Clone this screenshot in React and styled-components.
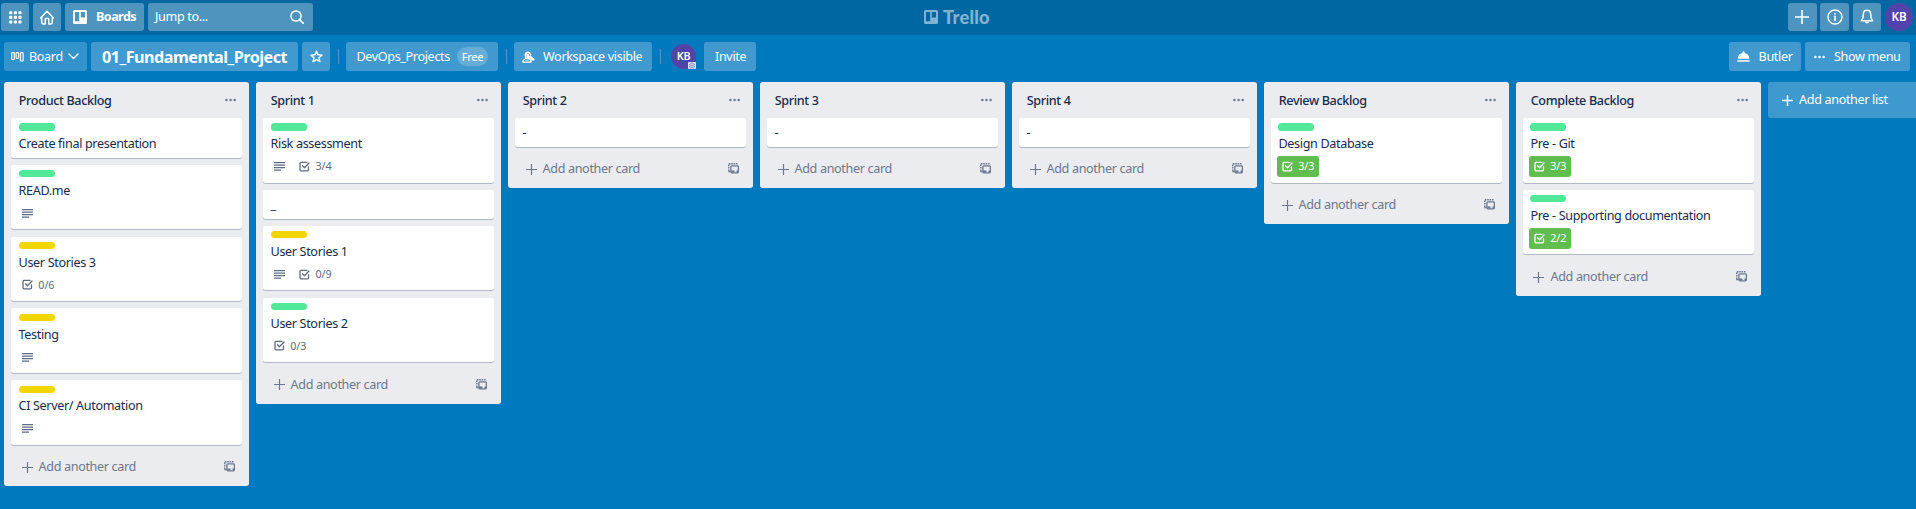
import React from "react";
import styled, { createGlobalStyle } from "styled-components";

const Global = createGlobalStyle`
  * { box-sizing: border-box; }
  html, body { margin: 0; padding: 0; height: 100%; overflow: hidden; }
  body {
    background: #0079bf;
    color: #172b4d;
    font: 400 12.6px/18px "Noto Sans", "Open Sans", sans-serif;
    letter-spacing: -0.35px;
  }
  svg { display: block; flex: none; }
`;

const Page = styled.div`
  width: 100vw;
  height: 100vh;
  overflow: hidden;
  display: flex;
  flex-direction: column;
`;

const Header = styled.header`
  height: 35px;
  flex: none;
  display: grid;
  grid-template-columns: 1fr auto 1fr;
  align-items: center;
  padding: 0 3px 1px 1px;
  background: #0067a3;
  color: #fff;
`;

const HeaderGroup = styled.div`
  display: flex;
  align-items: center;
  gap: 3.6px;
  justify-content: ${(p) => (p.$end ? "flex-end" : "flex-start")};
`;

const HeaderButton = styled.button`
  height: 28px;
  width: ${(p) => p.$w || "28.8px"};
  display: flex;
  align-items: center;
  justify-content: ${(p) => (p.$left ? "flex-start" : "center")};
  gap: 9px;
  padding: ${(p) => (p.$left ? "0 0 0 8px" : "0")};
  border: 0;
  border-radius: 2.7px;
  background: rgba(255, 255, 255, 0.3);
  color: #fff;
  font: inherit;
  font-weight: ${(p) => (p.$bold ? 700 : 400)};
  letter-spacing: ${(p) => (p.$bold ? "-0.55px" : "inherit")};
`;

const Search = styled(HeaderButton).attrs({ as: "div" })`
  width: 165px;
  justify-content: space-between;
  padding: 0 9px 0 7px;
`;

const Logo = styled.div`
  display: flex;
  align-items: center;
  gap: 5px;
  color: #80b3d1;
  font: 900 18.3px/24px Lato, "Noto Sans", sans-serif;
  letter-spacing: 0.2px;
`;

const Avatar = styled.div`
  position: relative;
  width: ${(p) => p.$size}px;
  height: ${(p) => p.$size}px;
  margin-right: ${(p) => p.$mr || 0}px;
  border-radius: 50%;
  background: #5243aa;
  color: #fff;
  display: flex;
  align-items: center;
  justify-content: center;
  font: 600 ${(p) => p.$font}px/1 "Noto Sans", sans-serif;
  letter-spacing: -0.2px;
`;

const AdminBadge = styled.span`
  position: absolute;
  right: 0;
  bottom: 0;
`;

const BoardBar = styled.nav`
  height: 47px;
  flex: none;
  display: flex;
  align-items: flex-start;
  justify-content: space-between;
  padding: 7px 6px 0 4px;
  color: #fff;
`;

const BarGroup = styled.div`
  display: flex;
  align-items: center;
`;

const BarButton = styled.button`
  height: 29px;
  width: ${(p) => p.$w}px;
  margin-right: ${(p) => p.$mr || 0}px;
  padding: 0 0 0 ${(p) => p.$pl}px;
  display: flex;
  align-items: center;
  gap: ${(p) => p.$gap || 0}px;
  border: 0;
  border-radius: 2.7px;
  background: rgba(255, 255, 255, ${(p) => p.$alpha || 0.25});
  color: #fff;
  font: inherit;
  letter-spacing: inherit;
  white-space: nowrap;
`;

const BoardName = styled(BarButton).attrs({ as: "h1" })`
  margin-top: 0;
  margin-bottom: 0;
  font-size: 16.2px;
  font-weight: 700;
  letter-spacing: -0.5px;
`;

const Divider = styled.span`
  width: 1px;
  height: 14.4px;
  margin-right: ${(p) => p.$mr}px;
  background: rgba(255, 255, 255, 0.24);
`;

const Pill = styled.span`
  height: 18.5px;
  width: 31px;
  border-radius: 10px;
  background: rgba(255, 255, 255, 0.2);
  font-size: 11.2px;
  line-height: 19px;
  text-align: center;
`;

const Board = styled.main`
  flex: 1;
  display: flex;
  align-items: flex-start;
  gap: 7.2px;
  padding-left: 4.2px;
`;

const ListBox = styled.section`
  width: 244.8px;
  flex: none;
  border-radius: 2.7px;
  background: #ebecf0;
`;

const ListHeader = styled.header`
  height: 36px;
  display: flex;
  align-items: center;
  justify-content: space-between;
  padding: 0 12.6px 0 14.6px;
  color: #6b778c;
`;

const ListTitle = styled.h2`
  margin: 0;
  padding-top: 2px;
  color: #172b4d;
  font: 500 12.6px/18px "Noto Sans", sans-serif;
  letter-spacing: -0.35px;
`;

const CardBox = styled.article`
  height: ${(p) => p.$h}px;
  margin: 0 7.2px 7.2px;
  padding: 5.4px 7.2px 0;
  border-radius: 2.7px;
  background: #fff;
  box-shadow: 0 1px 0 rgba(9, 30, 66, 0.25);
`;

const Label = styled.div`
  width: 36px;
  height: 7.2px;
  margin-bottom: 3.6px;
  border-radius: 3.6px;
  background: ${(p) => (p.$tone === "yellow" ? "#f2d600" : "#51e898")};
`;

const CardTitle = styled.div`
  height: 18px;
  line-height: 20px;
  white-space: nowrap;
`;

const Badges = styled.div`
  display: flex;
  gap: 4.2px;
  margin: 3.6px 0 0 -1.8px;
`;

const BadgeBox = styled.div`
  height: 21px;
  display: flex;
  align-items: center;
  gap: 5.6px;
  padding: 0 5px;
  border-radius: 2.7px;
  background: ${(p) => (p.$done ? "#61bd4f" : "transparent")};
  color: ${(p) => (p.$done ? "#fff" : "#5e6c84")};
  font-size: 10.8px;
  letter-spacing: -0.15px;
`;

const ListFooter = styled.footer`
  height: 34.2px;
  display: flex;
  align-items: flex-start;
  justify-content: space-between;
  padding: 6.500px 13.500px 0 17.400px;
  color: #6b778c;
`;

const AddCard = styled.div`
  display: flex;
  align-items: center;
  gap: 6px;
  letter-spacing: -0.35px;
`;

const TemplateSlot = styled.span`
  padding-top: 3px;
`;

const AddList = styled.div`
  flex: none;
  width: 244.8px;
  height: 36px;
  display: flex;
  align-items: center;
  gap: 6px;
  padding-left: 14px;
  border-radius: 2.7px;
  background: rgba(255, 255, 255, 0.24);
  color: #fff;
  white-space: nowrap;
`;

const Svg = ({ s = 12, h = s, vb = `0 0 ${s} ${h}`, children }) => (
  <svg width={s} height={h} viewBox={vb} fill="none" stroke="currentColor">
    {children}
  </svg>
);

const GridIcon = () => (
  <Svg s={13}>
    {[0, 4.6, 9.2].map((y) =>
      [0, 4.6, 9.2].map((x) => (
        <rect key={`${x}-${y}`} x={x + 0.2} y={y + 0.2} width="3.1" height="3.1" rx="0.7" fill="currentColor" stroke="none" />
      ))
    )}
  </Svg>
);
const HomeIcon = () => (
  <Svg s={14} h={15}>
    <path d="M.6 8 7 1.3 13.4 8M1.7 7v5.6q0 1.3 1.3 1.3h2.2V10q0-1.7 1.8-1.7T8.8 10v3.9H11q1.3 0 1.3-1.3V7" strokeWidth="1.5" strokeLinejoin="round" strokeLinecap="round" />
  </Svg>
);
const TrelloIcon = () => (
  <Svg s={14}>
    <path fill="currentColor" stroke="none" fillRule="evenodd" d="M1.5 0h11Q14 0 14 1.5v11q0 1.5-1.5 1.5h-11Q0 14 0 12.500v-11Q0 0 1.500 0ZM2 2v9.300h4.200V2ZM7.800 2v5.400H12V2Z" />
  </Svg>
);
const SearchIcon = () => (
  <Svg s={14}>
    <circle cx="6" cy="6" r="5.100" strokeWidth="1.500" />
    <path d="m9.800 9.800 3.500 3.500" strokeWidth="1.700" strokeLinecap="round" />
  </Svg>
);
const PlusIcon = ({ s = 11, w = 1.2 }) => (
  <Svg s={s}>
    <path d={`M${s / 2} .3V${s - 0.3}M.3 ${s / 2}H${s - 0.3}`} strokeWidth={w} strokeLinecap="round" />
  </Svg>
);
const InfoIcon = () => (
  <Svg s={16}>
    <circle cx="8" cy="8" r="7" strokeWidth="1.400" />
    <path d="M8 7.200v4.200" strokeWidth="1.600" strokeLinecap="round" />
    <circle cx="8" cy="4.800" r=".9" fill="currentColor" stroke="none" />
  </Svg>
);
const BellIcon = () => (
  <Svg s={14} h={16}>
    <path d="M7 1.300Q3.600 1.300 3.300 5L2.900 9 1.300 11.800h11.400L11.100 9l-.4-4Q10.400 1.300 7 1.300Z" strokeWidth="1.500" strokeLinejoin="round" />
    <path d="M4.900 12.500a2.100 2.100 0 0 0 4.200 0Z" fill="currentColor" stroke="none" />
  </Svg>
);
const BoardIcon = () => (
  <Svg s={13} h={10}>
    <rect x=".7" y=".7" width="2.600" height="6.800" rx=".5" strokeWidth="1.200" />
    <rect x="5.100" y=".7" width="2.600" height="5.600" rx=".5" strokeWidth="1.200" />
    <rect x="9.500" y=".7" width="2.600" height="8.300" rx=".5" strokeWidth="1.200" />
  </Svg>
);
const ChevronIcon = () => (
  <Svg s={11} h={7}>
    <path d="m1 1 4.500 4.500L10 1" strokeWidth="1.400" strokeLinecap="round" strokeLinejoin="round" />
  </Svg>
);
const StarIcon = () => (
  <Svg s={13} h={13}>
    <path d="m6.500 1.300 1.500 3.500 3.900.4-2.900 2.600.9 3.900-3.400-2-3.400 2L4 7.800 1.100 5.200 5 4.800Z" strokeWidth="1.500" strokeLinejoin="round" />
  </Svg>
);
const PeopleIcon = () => (
  <Svg s={13} h={12}>
    <path d="M2.900 5.300A3.200 3.200 0 0 1 4.500.8q2.200-.8 3.700.8 1.500 1.500.8 3.500l3 2.400q.8.800.4 2H9.700v1.200q-.2 1.100-1.200 1.100H1.200Q0 11.600.2 10.200.5 8.200 2.900 7.500Z" fill="currentColor" stroke="none" />
    <path d="M4.700 3.600a1.600 1.600 0 0 1 2.900 1.500M2 10h5.700q-.3-1.300-2.300-1.500-2.800-.2-3.400 1.500Z" stroke="#3f9bcf" strokeWidth="1" />
  </Svg>
);
const ButlerIcon = () => (
  <Svg s={13} h={12}>
    <path d="M.7 7.700Q1 2.900 5.500 2V1.300Q5.500.3 6.500.3t1 1V2q4.500.9 4.800 5.700Z" fill="currentColor" stroke="none" />
    <path d="M2.300 6.300q.5-2 2.400-2.700" stroke="#a4cee8" strokeWidth=".8" />
    <path d="M.3 9.900h12.400" strokeWidth="2" opacity=".75" />
  </Svg>
);
const DotsIcon = ({ s = 11 }) => (
  <Svg s={s} h={4} vb="0 0 11 4">
    {[1.4, 5.5, 9.6].map((x) => (
      <circle key={x} cx={x} cy="2" r="1.250" fill="currentColor" stroke="none" />
    ))}
  </Svg>
);
const DescriptionIcon = () => (
  <Svg s={11} h={10}>
    <path d="M0 1.500h11M0 4h11M0 6.500h11M0 9h7" strokeWidth="1.250" />
  </Svg>
);
const ChecklistIcon = () => (
  <Svg s={11}>
    <path d="M8 1.300H2Q1 1.300 1 2.300v6.500q0 1 1 1h6.500q1 0 1-1V6" strokeWidth="1.300" strokeLinecap="round" />
    <path d="m3.500 4.800 2 2L10 2" strokeWidth="1.300" strokeLinecap="round" strokeLinejoin="round" />
  </Svg>
);
const TemplateIcon = () => (
  <Svg s={11}>
    <path d="M.8 8V.8H9.500" strokeWidth="1.400" strokeDasharray="1.600 .8" />
    <path d="M.3 8.600h2" strokeWidth="1.300" />
    <rect x="2.900" y="2.800" width="7.500" height="7" rx="1" strokeWidth="1.300" />
    <path d="M3.200 8.400h3.300M8.500 8.400h1.600" strokeWidth="2" />
  </Svg>
);
const AdminIcon = () => (
  <Svg s={8} h={8}>
    <rect x="0" y="1" width="8" height="7" rx="1" fill="#dfe3f3" stroke="none" />
    <path d="m1 4 3-2.200L7 4M1 6l3-2 3 2M2 7.300l2-1 2 1" stroke="#5e6bb5" strokeWidth=".8" />
  </Svg>
);

const lists = [
  {
    title: "Product Backlog",
    cards: [
      { text: "Create final presentation", label: "green" },
      { text: "READ.me", label: "green", desc: true },
      { text: "User Stories 3", label: "yellow", check: "0/6" },
      { text: "Testing", label: "yellow", desc: true },
      { text: "CI Server/ Automation", label: "yellow", desc: true },
    ],
  },
  {
    title: "Sprint 1",
    cards: [
      { text: "Risk assessment", label: "green", desc: true, check: "3/4" },
      { text: "_" },
      { text: "User Stories 1", label: "yellow", desc: true, check: "0/9" },
      { text: "User Stories 2", label: "green", check: "0/3" },
    ],
  },
  { title: "Sprint 2", cards: [{ text: "-" }] },
  { title: "Sprint 3", cards: [{ text: "-" }] },
  { title: "Sprint 4", cards: [{ text: "-" }] },
  { title: "Review Backlog", cards: [{ text: "Design Database", label: "green", check: "3/3", done: true }] },
  {
    title: "Complete Backlog",
    cards: [
      { text: "Pre - Git", label: "green", check: "3/3", done: true },
      { text: "Pre - Supporting documentation", label: "green", check: "2/2", done: true },
    ],
  },
];

function Card({ text, label, desc, check, done }) {
  const hasBadges = desc || check;
  return (
    <CardBox $h={hasBadges ? 64.6 : label ? 39.6 : 28.8}>
      {label && <Label $tone={label} />}
      <CardTitle>{text}</CardTitle>
      {hasBadges && (
        <Badges>
          {desc && <BadgeBox><DescriptionIcon /></BadgeBox>}
          {check && <BadgeBox $done={done}><ChecklistIcon />{check}</BadgeBox>}
        </Badges>
      )}
    </CardBox>
  );
}

function List({ title, cards }) {
  return (
    <ListBox>
      <ListHeader>
        <ListTitle>{title}</ListTitle>
        <DotsIcon />
      </ListHeader>
      {cards.map((c) => <Card key={c.text} {...c} />)}
      <ListFooter>
        <AddCard><PlusIcon />Add another card</AddCard>
        <TemplateSlot><TemplateIcon /></TemplateSlot>
      </ListFooter>
    </ListBox>
  );
}

export default function App() {
  return (
    <Page>
      <Global />
      <Header>
        <HeaderGroup>
          <HeaderButton $w="28px"><GridIcon /></HeaderButton>
          <HeaderButton><HomeIcon /></HeaderButton>
          <HeaderButton $w="79.400px" $left $bold><TrelloIcon />Boards</HeaderButton>
          <Search>Jump to...<SearchIcon /></Search>
        </HeaderGroup>
        <Logo><TrelloIcon />Trello</Logo>
        <HeaderGroup $end>
          <HeaderButton><PlusIcon s={14} w={1.6} /></HeaderButton>
          <HeaderButton><InfoIcon /></HeaderButton>
          <HeaderButton><BellIcon /></HeaderButton>
          <Avatar $size={28} $font={11.7}>KB</Avatar>
        </HeaderGroup>
      </Header>
      <BoardBar>
        <BarGroup>
          <BarButton $w={83} $mr={4} $pl={7} $gap={5} $alpha={0.2}><BoardIcon />Board<ChevronIcon /></BarButton>
          <BoardName $w={207} $mr={4} $pl={11}>01_Fundamental_Project</BoardName>
          <BarButton $w={28} $mr={8} $pl={7.5}><StarIcon /></BarButton>
          <Divider $mr={7} />
          <BarButton $w={152} $mr={8} $pl={10.4} $gap={7}>DevOps_Projects<Pill>Free</Pill></BarButton>
          <Divider $mr={7} />
          <BarButton $w={138} $mr={8} $pl={8} $gap={8}><PeopleIcon />Workspace visible</BarButton>
          <Divider $mr={10} />
          <Avatar $size={25} $font={10.8} $mr={8}>KB<AdminBadge><AdminIcon /></AdminBadge></Avatar>
          <BarButton $w={52} $pl={11}>Invite</BarButton>
        </BarGroup>
        <BarGroup>
          <BarButton $w={72} $mr={4} $pl={8} $gap={8.6}><ButlerIcon />Butler</BarButton>
          <BarButton $w={105} $pl={9} $gap={9}><DotsIcon />Show menu</BarButton>
        </BarGroup>
      </BoardBar>
      <Board>
        {lists.map((l) => <List key={l.title} {...l} />)}
        <AddList><PlusIcon w={1.5} />Add another list</AddList>
      </Board>
    </Page>
  );
}
